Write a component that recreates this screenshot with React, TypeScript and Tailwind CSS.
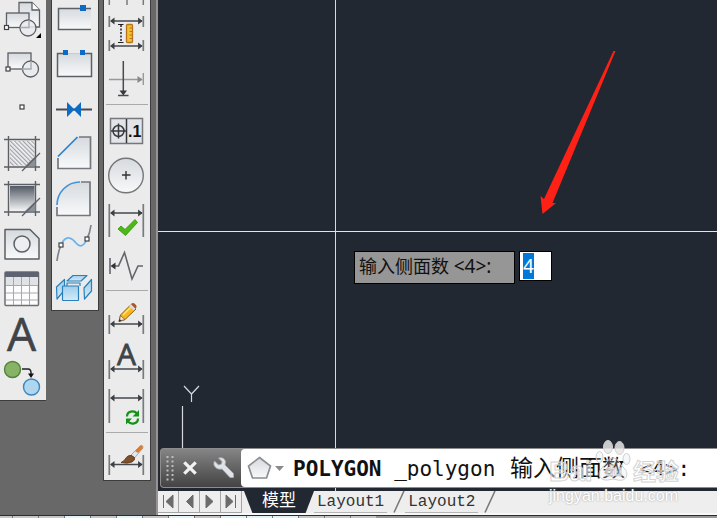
import { useEffect, useRef } from 'react';
import type { ReactNode } from 'react';

type Tool = { label: string; top: number; height: number; icon: ReactNode };

const INK = '#5c5f64';
const BLUE = '#0a6cc4';

function Handle({ x, y }: { x: number; y: number }) {
  return <rect x={x - 2} y={y - 2} width="4" height="4" fill="#fff" stroke="#3f4246" strokeWidth="1.2" />;
}

function Dim({ y, top, bottom }: { y: number; top: number; bottom: number }) {
  return (
    <g>
      <path d={`M109.3 ${top}V${bottom}M143.3 ${top}V${bottom}`} stroke="#777b80" strokeWidth="1.7" />
      <path d={`M111 ${y}H142`} stroke="#45484d" strokeWidth="1.5" />
      <path d={`M110 ${y}l4.500-3.500v7zM142.600 ${y}l-4.500-3.500v7z`} fill="#3c3f43" />
    </g>
  );
}

function HatchFrame({ y }: { y: number }) {
  return (
    <g>
      <path d={`M8.500 ${y}V${y + 35}M35.500 ${y}V${y + 35}M4 ${y + 3.5}H40M4 ${y + 31}H40`} stroke={INK} strokeWidth="1.4" />
      <path d={`M35.500 ${y + 20}V${y + 30}H25z`} fill="#8b9199" />
      <path d={`M22 ${y + 35}L40 ${y + 17}`} stroke={INK} strokeWidth="1.2" />
    </g>
  );
}

function Gradients() {
  return (
    <svg className="absolute size-0" aria-hidden="true">
      <defs>
        <linearGradient id="pane" x1="0" y1="0" x2="0" y2="1">
          <stop offset="0" stopColor="#d6dade" />
          <stop offset="1" stopColor="#f8f9fa" />
        </linearGradient>
        <linearGradient id="steel" x1="0" y1="0" x2="0" y2="1">
          <stop offset="0" stopColor="#535a64" />
          <stop offset="1" stopColor="#f1f2f4" />
        </linearGradient>
        <linearGradient id="ice" x1="0" y1="0" x2="0" y2="1">
          <stop offset="0" stopColor="#9fcdeb" />
          <stop offset="1" stopColor="#d3ebf8" />
        </linearGradient>
        <pattern id="hatch" width="3" height="3" patternUnits="userSpaceOnUse" patternTransform="rotate(-45)">
          <rect width="3" height="3" fill="#f2f2f3" />
          <rect width="1.2" height="3" fill="#9da1a6" />
        </pattern>
      </defs>
    </svg>
  );
}

const drawTools: Tool[] = [
  {
    label: 'Insert block', top: 0, height: 42,
    icon: (
      <g stroke={INK} strokeWidth="1.3">
        <path d="M19 2.500H32L39.500 10V27H19z" fill="url(#pane)" />
        <path d="M32 2.500V10H39.500" fill="#fff" />
        <rect x="6.500" y="13" width="22.500" height="14.500" fill="url(#pane)" />
        <circle cx="28" cy="28" r="8" fill="#e9ebee" fillOpacity=".85" />
        <path d="M20 27.500H29V20" fill="none" stroke="#a9adb3" />
        <Handle x={6.500} y={27.500} />
        <path d="M41 33V38H36z" fill="#000" stroke="none" />
      </g>
    ),
  },
  {
    label: 'Make block', top: 42, height: 45,
    icon: (
      <g stroke={INK} strokeWidth="1.3">
        <rect x="8" y="53" width="23" height="16" fill="url(#pane)" />
        <circle cx="30.500" cy="69" r="8" fill="#e9ebee" fillOpacity=".85" />
        <path d="M22 69H31V61" fill="none" stroke="#a9adb3" />
        <Handle x={8} y={69} />
      </g>
    ),
  },
  { label: 'Point', top: 87, height: 45, icon: <Handle x={22} y={107} /> },
  {
    label: 'Hatch', top: 132, height: 45,
    icon: <g><rect x="10" y="141" width="24.500" height="24.500" fill="url(#hatch)" /><HatchFrame y={136} /></g>,
  },
  {
    label: 'Gradient', top: 177, height: 45,
    icon: <g><rect x="10" y="186" width="24.500" height="24.500" fill="url(#steel)" /><HatchFrame y={181} /></g>,
  },
  {
    label: 'Region', top: 222, height: 45,
    icon: (
      <g stroke={INK} strokeWidth="1.5" strokeLinejoin="round">
        <path d="M5 229.500H30L39 238.500V259H5z" fill="url(#pane)" />
        <circle cx="22" cy="244" r="8" fill="#eceef0" />
      </g>
    ),
  },
  {
    label: 'Table', top: 267, height: 45,
    icon: (
      <g>
        <rect x="5" y="272" width="33.500" height="33.500" rx="1" fill="#fcfcfc" stroke="#6b6e73" strokeWidth="1.5" />
        <path d="M5 272H38.500V277H5z" fill="#5d6370" />
        <path d="M6 277H38V286H6z" fill="#e0e2e5" />
        <path d="M13.500 277V305M21.500 277V305M29.500 277V305M6 285.500H38M6 293H38M6 300H38" stroke="#a5a9ae" />
      </g>
    ),
  },
  {
    label: 'Multiline text', top: 312, height: 45,
    icon: <text x="7" y="351" className="font-['Open_Sans',sans-serif] text-[46px]" fill="#404448" stroke="#404448" strokeWidth=".6">A</text>,
  },
  {
    label: 'Add selected', top: 357, height: 43,
    icon: (
      <g>
        <circle cx="12.500" cy="369.500" r="8" fill="#86b366" stroke="#55803f" strokeWidth="1.4" />
        <path d="M22 369H28Q31 369 31 373V375" fill="none" stroke="#222" strokeWidth="1.5" />
        <path d="M28 373.500H34L31 378z" fill="#111" />
        <circle cx="31.500" cy="387" r="8" fill="#add7ee" stroke="#3e86be" strokeWidth="1.4" />
      </g>
    ),
  },
];

const modifyTools: Tool[] = [
  {
    label: 'Break at point', top: 0, height: 42,
    icon: (
      <g>
        <rect x="58.500" y="8.500" width="32.500" height="21" fill="url(#pane)" />
        <path d="M91 8.500H58.500V29.500H91" fill="none" stroke={INK} strokeWidth="1.5" />
        <rect x="80" y="5" width="6" height="6" fill={BLUE} />
      </g>
    ),
  },
  {
    label: 'Break', top: 42, height: 45,
    icon: (
      <g>
        <rect x="57.500" y="53.500" width="34" height="23" fill="url(#pane)" />
        <path d="M65 53.500H57.500V76.500H91.500V53.500H83" fill="none" stroke={INK} strokeWidth="1.5" />
        <path d="M68 53.500H80" stroke="#c9cdd2" />
        <rect x="63" y="50" width="5" height="5" fill={BLUE} />
        <rect x="80" y="50" width="5" height="5" fill={BLUE} />
      </g>
    ),
  },
  {
    label: 'Join', top: 87, height: 45,
    icon: <g><path d="M56 109.500H92" stroke="#484b50" strokeWidth="2" /><path d="M67 102L74.500 109.500L67 117zM81 102L73.500 109.500L81 117z" fill={BLUE} /></g>,
  },
  {
    label: 'Chamfer', top: 132, height: 45,
    icon: (
      <g strokeWidth="1.700">
        <path d="M58 157V168.500H90.500V137H78z" fill="url(#pane)" />
        <path d="M58 158V168.500H90.500V137H79" fill="none" stroke="#74777c" />
        <path d="M58 156.500L77.500 137" stroke="#2f80cc" />
      </g>
    ),
  },
  {
    label: 'Fillet', top: 177, height: 45,
    icon: (
      <g strokeWidth="1.700">
        <path d="M57 205A23 23 0 0 1 80 182H90V215.500H57z" fill="url(#pane)" />
        <path d="M57 207V215.500H90V182H81" fill="none" stroke="#74777c" />
        <path d="M57 205A23 23 0 0 1 80 182" fill="none" stroke="#4592d6" />
      </g>
    ),
  },
  {
    label: 'Blend curves', top: 222, height: 45,
    icon: (
      <g fill="none" strokeWidth="1.700">
        <path d="M57 261Q58 252 61 245M87 239Q90 233 91 225" stroke="#808388" />
        <path d="M61 245C66 233 73 239 76 243C80 248 84 246 87 239" stroke="#69b1ee" />
        <Handle x={61} y={245} /><Handle x={87} y={239} />
      </g>
    ),
  },
  {
    label: 'Explode', top: 267, height: 43,
    icon: (
      <g fill="url(#ice)" stroke="#2980ba" strokeWidth="1.200" strokeLinejoin="round">
        <path d="M67 281L73 275.500H87L81 281z" />
        <path d="M67 286V283H80V286" fill="none" />
        <path d="M56.500 287L64.500 279.500V290L57 299z" />
        <path d="M84 288L91.500 279.500V291L84.500 299z" />
        <rect x="62.500" y="286" width="16" height="14.500" rx=".5" />
      </g>
    ),
  },
];

const dimensionTools: (Tool | 'separator')[] = [
  { label: 'Baseline', top: 0, height: 12, icon: <path d="M109.300 0V5M127 0V5M143.300 0V5" stroke="#777b80" strokeWidth="1.500" /> },
  {
    label: 'Dimension space', top: 12, height: 45,
    icon: (
      <g>
        <Dim y={21} top={16} bottom={27} /><Dim y={46} top={40} bottom={51} />
        <path d="M118 24.500H123.500M118 42.500H123.500" stroke="#222" />
        <path d="M121 25V42" stroke="#222" strokeWidth="1.500" strokeDasharray="2 1.500" />
        <rect x="126.500" y="24.500" width="6" height="18" rx="1" fill="#f4bf31" stroke="#b8741c" strokeWidth="1.300" />
        <path d="M129.500 28H132M129.500 31.500H132M129.500 35H132M129.500 38.500H132" stroke="#b8741c" />
      </g>
    ),
  },
  {
    label: 'Dimension break', top: 57, height: 43,
    icon: (
      <g>
        <path d="M109 79.500H142M143.300 73V85" stroke="#96999d" strokeWidth="1.400" />
        <path d="M142.500 79.500l-5-3.500v7z" fill="#84878b" />
        <path d="M123.300 61V91M118 95.500H128.500" stroke="#484b50" strokeWidth="1.500" />
        <path d="M119.500 90.500H127L123.300 95.500z" fill="#36393d" />
      </g>
    ),
  },
  'separator',
  {
    label: 'Tolerance', top: 108, height: 45,
    icon: (
      <g fill="none" stroke="#36393d" strokeWidth="1.500">
        <rect x="110.500" y="118.500" width="32" height="25" fill="#e2e4e7" stroke="#74777c" />
        <path d="M126.500 119V143" />
        <circle cx="118.500" cy="131" r="5.500" />
        <path d="M111 131H126M118.500 123.500V138.500" />
        <text x="128" y="136.500" className="font-['Liberation_Sans',sans-serif] text-[16px] font-bold" fill="#111" stroke="none">.1</text>
      </g>
    ),
  },
  {
    label: 'Center mark', top: 153, height: 45,
    icon: (
      <g><circle cx="126" cy="175.500" r="17.300" fill="url(#pane)" stroke="#74777c" strokeWidth="1.400" /><path d="M122 175H130.500M126 171V179.500" stroke="#333" strokeWidth="1.400" /></g>
    ),
  },
  {
    label: 'Inspection', top: 198, height: 50,
    icon: <g><Dim y={213} top={204} bottom={237} /><path d="M118 229L121 226L125 229.500L135 219.500L137.500 222.500L125.500 235.500z" fill="#4bb817" stroke="#329409" strokeWidth=".8" /></g>,
  },
  {
    label: 'Jogged linear', top: 248, height: 38,
    icon: (
      <g fill="none" stroke="#63666b" strokeWidth="1.600">
        <path d="M110 258V274" /><path d="M113 266H118.500L124.500 252.500L132 279L138 266H143" />
        <path d="M110.500 266l5-3.500v7z" fill="#333" stroke="none" />
      </g>
    ),
  },
  'separator',
  {
    label: 'Dimension edit', top: 294, height: 42,
    icon: (
      <g>
        <Dim y={324} top={315} bottom={334} />
        <path d="M119 321.500L120.500 315L131 304.500L136 309L125 319.500z" fill="#f8b81b" stroke="#8d601f" />
        <path d="M119 321.500L120.500 315.500L125 319.500z" fill="#f5dfb7" stroke="#6b543b" strokeWidth=".7" />
        <path d="M123 315L131.500 306.500" stroke="#ffe57a" strokeWidth="1.500" />
        <path d="M129 306L131 304L135.500 308.500L133.500 310.500z" fill="#d9d9d9" />
        <path d="M131 304Q133 302 135 304Q138 306.500 135.500 308.500z" fill="#aa5428" />
        <path d="M119 321.500L119.500 319L121.500 320.500z" fill="#222" />
      </g>
    ),
  },
  {
    label: 'Dimension text edit', top: 336, height: 46,
    icon: <g><Dim y={369} top={360} bottom={379} /><text x="117" y="365" className="font-['Open_Sans',sans-serif] text-[30px]" fill="#404448" stroke="#404448" strokeWidth=".8">A</text></g>,
  },
  {
    label: 'Dimension update', top: 382, height: 46,
    icon: (
      <g>
        <Dim y={398} top={389} bottom={423} />
        <g fill="none" stroke="#159218" strokeWidth="2.200">
          <path d="M127 416.500C127 411 134 410 137 413.500M138 418.500C138 424 131 425 128 421.500" />
        </g>
        <path d="M139 410V416.500H132.500zM126 424.500V418.500H132z" fill="#159218" />
      </g>
    ),
  },
  'separator',
  {
    label: 'Dimension style', top: 436, height: 44,
    icon: (
      <g>
        <Dim y={464.500} top={455} bottom={475} />
        <path d="M131 455L140 446Q143 444 143 448L134 458.500z" fill="#e6e6e6" stroke="#9a9a9a" strokeWidth=".8" />
        <path d="M135 451L140.500 445.500Q143.500 445 142.500 448.500L138 453z" fill="#d97d33" />
        <path d="M121 462.500C125 461 125 458 128 456Q131 454 134.500 457.500Q135.500 460 132 462Q128 464 121 462.500z" fill="#80502a" stroke="#55331c" strokeWidth=".8" />
      </g>
    ),
  },
];

function ToolButton({ tool, left }: { tool: Tool; left: number }) {
  return (
    <button type="button" aria-label={tool.label} className="block w-full">
      <svg className="block w-full overflow-visible" viewBox={`${left} ${tool.top} 46 ${tool.height}`} aria-hidden="true">{tool.icon}</svg>
    </button>
  );
}

function Toolbar({ label, tools, left, edges }: { label: string; tools: (Tool | 'separator')[]; left: number; edges: string }) {
  return (
    <div role="toolbar" aria-label={label} className={`box-content w-[46px] shrink-0 border-b border-[#3c3c3c] bg-[#ebebeb] ${edges}`}>
      {tools.map((tool, i) =>
        tool === 'separator' ? (
          <div key={i} className="flex h-2 items-center px-0.5"><div className="h-px w-full bg-[#aaaaaa]" /></div>
        ) : (
          <ToolButton key={tool.label} tool={tool} left={left} />
        ),
      )}
    </div>
  );
}

function DynamicPrompt() {
  const field = useRef<HTMLInputElement>(null);
  useEffect(() => {
    field.current?.focus();
    field.current?.select();
  }, []);
  return (
    <form className="absolute top-[251px] left-[196px] flex items-start gap-1 font-['Noto_Sans','Noto_Sans_CJK_SC',sans-serif] text-[18px]">
      <label htmlFor="sides" className="h-[33px] w-[161px] border border-black bg-[#969696] pl-1 leading-7 whitespace-nowrap text-[#111]">
        输入侧面数 <span className="text-[19px]">&lt;4&gt;:</span>
      </label>
      <input
        id="sides"
        ref={field}
        defaultValue="4"
        className="h-[30px] w-[33px] rounded-none border border-black bg-white pl-[3px] text-[19px] leading-6 text-black outline-none selection:bg-[#0078d7] selection:text-white"
      />
    </form>
  );
}

function Watermark() {
  return (
    <div className="pointer-events-none absolute right-[38px] bottom-[9px] w-[130px] font-['Liberation_Sans','Noto_Sans_CJK_SC',sans-serif]">
      <div className="flex h-[46px] items-end justify-between leading-7 font-bold text-white/50 [-webkit-text-stroke:1px_#d4d4d4]">
        <span className="text-[28px]">Bai</span>
        <svg className="mb-1 h-[42px] w-9 shrink-0" viewBox="0 0 36 42" fill="#e6e6e6" fillOpacity=".85" stroke="#cfcfcf" strokeWidth="1" aria-hidden="true">
          <ellipse cx="13" cy="7" rx="4.500" ry="6.500" /><ellipse cx="24.500" cy="8" rx="4.500" ry="6.500" />
          <ellipse cx="4.500" cy="17" rx="3.500" ry="5.500" fillOpacity=".3" /><ellipse cx="31.500" cy="19" rx="3.500" ry="5.500" fillOpacity=".3" />
          <path d="M18 18C12 18 12 24 7 28C1 34 5 41 13 40Q18 38 23 40C31 42 35 34 29 28C24 24 24 18 18 18z" fillOpacity=".25" />
          <text x="10" y="36" className="text-[14px]" fill="#fff" fillOpacity=".6">du</text>
        </svg>
        <span className="text-[23px] whitespace-nowrap">经验</span>
      </div>
      <div className="text-[16px] leading-5 whitespace-nowrap text-white [text-shadow:0_0_2px_#999]">jingyan.baidu.com</div>
    </div>
  );
}

function CommandLine() {
  return (
    <div className="mb-[3px] ml-0.5 flex h-10 rounded-l-[4px] border-y border-l border-[#8d8d8d] bg-linear-to-b from-[#858585] to-[#444444]">
      <div className="flex w-20 shrink-0 items-center pl-[5px]">
        <svg className="h-[27px] w-2" viewBox="0 0 8 27" aria-hidden="true">
          <path d="M1.500 1V27M6.500 1V27" stroke="#bdbdbd" strokeWidth="2" strokeDasharray="2 2.500" />
        </svg>
        <button type="button" aria-label="Close" className="ml-2">
          <svg className="size-4" viewBox="0 0 14 14"><path d="M2 2L12 12M12 2L2 12" stroke="#f2f2f2" strokeWidth="2.800" /></svg>
        </button>
        <button type="button" aria-label="Customize" className="ml-[15px]">
          <svg className="size-[22px]" viewBox="0 0 22 22">
            <path d="M1.500 4L5.500 8L8.500 7L9 4.500L5.500 1Q11 -.5 12.500 4.500L12 8L20.500 16.500V20.500H17L9 12Q3 13 1 8Q.5 6 1.500 4z" fill="#dfe2e6" stroke="#a9adb1" strokeWidth=".8" />
          </svg>
        </button>
      </div>
      <div className="flex min-w-0 grow items-center overflow-hidden rounded-l-[4px] bg-white pl-1.5">
        <button type="button" aria-label="Recent commands" className="flex shrink-0 items-center gap-[3px]">
          <svg className="h-6 w-[25px]" viewBox="0 0 25 24"><path d="M12.500 1.500L23.500 10L19.500 22H5.500L1.500 10z" fill="url(#pane)" stroke="#8b8e92" strokeWidth="1.700" /></svg>
          <svg className="h-[5px] w-[9px]" viewBox="0 0 9 5"><path d="M0 0H9L4.500 5z" fill="#8a8a8a" /></svg>
        </button>
        <p className="ml-[9px] font-['DejaVu_Sans_Mono','Noto_Sans_CJK_SC',monospace] text-[21px] leading-9 whitespace-pre text-[#111]">
          <b>POLYGON</b> _polygon <span className="mx-0.5 text-[23px]">输入侧面数</span> &lt;4&gt;:
        </p>
      </div>
    </div>
  );
}

function Slash() {
  return <svg className="h-[22px] w-3 shrink-0" viewBox="0 0 12 22" aria-hidden="true"><path d="M11 0L1 21.500" stroke="#777" strokeWidth="1.500" /></svg>;
}

const pagers = [
  { label: 'First layout', d: 'M5.500 4V17M15 4V17L8 10.500z' },
  { label: 'Previous layout', d: 'M14 4V17L7.500 10.500z' },
  { label: 'Next layout', d: 'M6 4V17L13 10.500z' },
  { label: 'Last layout', d: 'M5 4V17L12 10.500zM14.500 4V17' },
];

function LayoutTabs() {
  return (
    <nav className="flex h-6 items-start border-b-2 border-[#f8f8f8] bg-[#eeeeee] font-['Liberation_Mono','Noto_Sans_CJK_SC',monospace] text-[16px] leading-[22px] text-[#333]">
      {pagers.map((p) => (
        <button key={p.label} type="button" aria-label={p.label} className="w-[21px] shrink-0 border-r border-b border-[#a5a5a5]">
          <svg className="h-[21px] w-5" viewBox="0 0 20 21"><path d={p.d} fill="#6c6c6c" stroke="#6c6c6c" strokeWidth="1" /></svg>
        </button>
      ))}
      <button type="button" className="ml-0.5 h-[22px] w-[70px] shrink-0 bg-[#222831] text-[17px] text-white [clip-path:polygon(0_0,100%_0,88%_100%,12%_100%)]">模型</button>
      <button type="button" className="h-[22px] shrink-0 border-b border-[#b5b5b5] px-[3px]">Layout1</button>
      <div className="ml-1.5"><Slash /></div>
      <button type="button" className="h-[22px] shrink-0 border-b border-[#b5b5b5] px-[3px]">Layout2</button>
      <div className="ml-1.5"><Slash /></div>
    </nav>
  );
}

const statusCells = [
  'bg-[#c6c6c6]', 'bg-[#c6c6c6]', 'bg-[#e0f4f8]', 'bg-[#c6c6c6]', 'bg-[#e0f4f8]', 'bg-[#c6c6c6]', 'bg-[#e0f4f8]',
  'bg-[#c6c6c6]', 'bg-[#e0f4f8]', 'bg-[#e0f4f8]', 'bg-[#e0f4f8]', 'bg-[#c6c6c6]', 'bg-[#c6c6c6]', 'bg-[#c6c6c6]',
];

export default function App() {
  return (
    <div className="flex h-screen flex-col overflow-hidden bg-[#686868]">
      <Gradients />
      <div className="flex min-h-0 grow">
        <aside className="flex w-[158px] shrink-0 items-start gap-[5px] border-r-2 border-[#989292]">
          <Toolbar label="Draw" tools={drawTools} left={0} edges="" />
          <Toolbar label="Modify" tools={modifyTools} left={52} edges="border-x" />
          <Toolbar label="Dimension" tools={dimensionTools} left={104} edges="border-x -ml-px" />
        </aside>
        <main className="flex min-w-0 grow flex-col">
          <div className="relative flex min-h-0 grow flex-col justify-end overflow-hidden bg-[#222831]">
            <div className="absolute inset-y-0 left-[177px] w-px bg-[#d8d9db]" />
            <div className="absolute inset-x-0 top-[231px] h-px bg-[#e4e4e6]" />
            <svg className="absolute top-0 left-0 h-[448px] w-[559px]" viewBox="158 0 559 448" aria-hidden="true">
              <path d="M613.500 51H615.500L552.500 203H556L542.500 214L540.500 196L544 199z" fill="#ff2116" />
              <path d="M182.500 406V448M184 386L191.500 394L199 386M191.500 394V402" fill="none" stroke="#d5d7da" strokeWidth="1.200" />
            </svg>
            <DynamicPrompt />
            <div className="relative"><CommandLine /></div>
          </div>
          <div className="relative">
            <LayoutTabs />
            <Watermark />
          </div>
        </main>
      </div>
      <footer className="flex h-[3px] shrink-0 border-t border-[#2c2c2c] bg-[#969996]">
        <div className="w-3 bg-[#c6c6c6]" />
        {statusCells.map((cell, i) => <div key={i} className={`w-[26px] shrink-0 border-l border-[#777777] ${cell}`} />)}
      </footer>
    </div>
  );
}
